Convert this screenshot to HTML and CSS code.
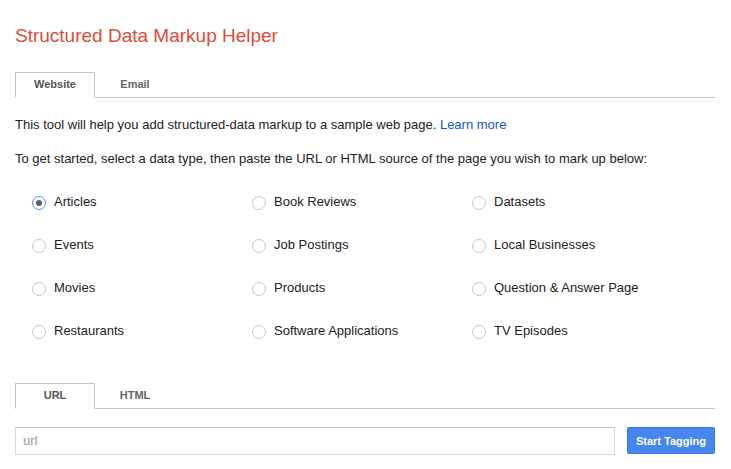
FILE: index.html
```html
<!DOCTYPE html>
<html>
<head>
<meta charset="utf-8">
<link rel="stylesheet" href="styles.css">
</head>
<body>
<div class="page">
  <h1 class="title">Structured Data Markup Helper</h1>
  <div class="tabs">
    <div class="tab active">Website</div>
    <div class="tab">Email</div>
    <div class="tab-rest"></div>
  </div>
  <p class="intro">This tool will help you add structured-data markup to a sample web page. <a class="link" href="#">Learn more</a></p>
  <p class="intro second">To get started, select a data type, then paste the URL or HTML source of the page you wish to mark up below:</p>
  <div class="types">
    <label class="type"><span class="radio checked"></span>Articles</label>
    <label class="type"><span class="radio"></span>Book Reviews</label>
    <label class="type"><span class="radio"></span>Datasets</label>
    <label class="type"><span class="radio"></span>Events</label>
    <label class="type"><span class="radio"></span>Job Postings</label>
    <label class="type"><span class="radio"></span>Local Businesses</label>
    <label class="type"><span class="radio"></span>Movies</label>
    <label class="type"><span class="radio"></span>Products</label>
    <label class="type"><span class="radio"></span>Question &amp; Answer Page</label>
    <label class="type"><span class="radio"></span>Restaurants</label>
    <label class="type"><span class="radio"></span>Software Applications</label>
    <label class="type"><span class="radio"></span>TV Episodes</label>
  </div>
  <div class="tabs tabs2">
    <div class="tab active">URL</div>
    <div class="tab">HTML</div>
    <div class="tab-rest"></div>
  </div>
  <div class="url-row">
    <div class="url-input">url</div>
    <button class="start">Start Tagging</button>
  </div>
</div>
</body>
</html>
```
FILE: styles.css
```css
html, body {
  margin: 0;
  padding: 0;
  background: #fff;
}
body {
  font-family: Arial, "Liberation Sans", sans-serif;
  color: #222;
}
.page {
  width: 700px;
  padding: 0 16px 0 15px;
}
.title {
  margin: 0;
  padding-top: 24px;
  height: 72px;
  box-sizing: border-box;
  font-size: 19px;
  font-weight: normal;
  line-height: 24px;
  color: #dd4b39;
}
.tabs {
  display: flex;
  height: 26px;
}
.tab {
  width: 80px;
  box-sizing: border-box;
  font-size: 11px;
  font-weight: bold;
  color: #666;
  text-align: center;
  line-height: 25px;
  border-bottom: 1px solid #c6c6c6;
}
.tab.active {
  border: 1px solid #c6c6c6;
  border-bottom: 1px solid transparent;
  line-height: 23px;
  color: #555;
}
.tab-rest {
  flex: 1;
  border-bottom: 1px solid #c6c6c6;
}
.intro {
  margin: 0;
  font-size: 13px;
  line-height: 16px;
  padding-top: 19px;
}
.intro.second {
  padding-top: 18px;
}
.link {
  color: #15c;
  text-decoration: none;
}
.types {
  display: grid;
  grid-template-columns: 220px 220px 220px;
  grid-auto-rows: 43px;
  padding: 27px 0 0 17px;
}
.type {
  display: flex;
  align-items: flex-start;
  font-size: 13px;
  line-height: 16px;
  color: #222;
}
.radio {
  width: 14px;
  height: 14px;
  box-sizing: border-box;
  border: 1px solid #c8c8c8;
  border-radius: 50%;
  margin: 2px 8px 0 0;
  position: relative;
  flex: none;
}
.radio.checked {
  border-color: #4d90fe;
}
.radio.checked::after {
  content: "";
  position: absolute;
  left: 3px;
  top: 3px;
  width: 6px;
  height: 6px;
  border-radius: 50%;
  background: #5f5f5f;
}
.tabs2 {
  margin-top: 17px;
}
.url-row {
  display: flex;
  align-items: flex-start;
  margin-top: 18px;
}
.url-input {
  width: 600px;
  height: 28px;
  box-sizing: border-box;
  border: 1px solid #d9d9d9;
  border-top-color: #c0c0c0;
  font-size: 13px;
  line-height: 26px;
  color: #999;
  padding-left: 7px;
}
.start {
  margin-left: 12px;
  width: 88px;
  height: 27px;
  box-sizing: border-box;
  border: 1px solid #3079ed;
  border-radius: 2px;
  background: #4787ed;
  color: #fff;
  font-family: Arial, "Liberation Sans", sans-serif;
  font-size: 11px;
  font-weight: bold;
  padding: 0;
}
```
